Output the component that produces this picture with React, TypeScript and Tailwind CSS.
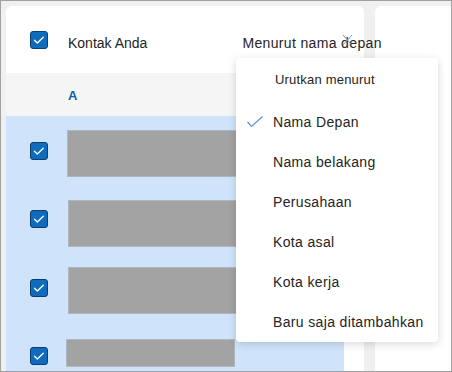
import React from 'react';

const Checkbox: React.FC<{ className?: string }> = ({ className = '' }) => (
  <div
    className={`w-[18px] h-[18px] shrink-0 rounded-[3px] bg-[#0f6cbd] border border-[#0c3d6b] flex items-center justify-center ${className}`}
  >
    <svg width="16" height="16" viewBox="0 0 16 16" fill="none">
      <path
        d="M3.5 8.3 L6.3 11 L12.3 5.2"
        stroke="#ffffff"
        strokeWidth="1.3"
        strokeLinecap="round"
        strokeLinejoin="round"
      />
    </svg>
  </div>
);

const sortOptions = [
  'Nama Depan',
  'Nama belakang',
  'Perusahaan',
  'Kota asal',
  'Kota kerja',
  'Baru saja ditambahkan',
];

export default function App() {
  return (
    <div
      className="relative w-[452px] h-[372px] overflow-hidden border border-[#a0a0a0] bg-[#f0f0f0] pt-[5px] pl-[5px] flex gap-[11px] text-[#242424]"
      style={{ fontFamily: '"Liberation Sans", Arial, sans-serif' }}
    >
      {/* Contact list */}
      <div className="w-[358px] shrink-0 flex flex-col">
        {/* Header */}
        <div className="h-[67px] shrink-0 bg-white rounded-t-[6px] flex items-start pl-[24px]">
          <Checkbox className="mt-[25px]" />
          <span className="shrink-0 mt-[27px] ml-[20px] text-[14px] leading-5 whitespace-nowrap">
            Kontak Anda
          </span>
          <span className="relative z-10 shrink-0 mt-[27px] ml-[95px] text-[14px] leading-5 tracking-[0.35px] whitespace-nowrap">
            Menurut nama depan
          </span>
        </div>

        {/* Letter group */}
        <div className="h-[43px] shrink-0 bg-[#f5f5f5] pl-[62px] pt-[10px]">
          <span className="text-[13px] leading-5 font-bold text-[#115ea3]">
            A
          </span>
        </div>

        {/* Rows */}
        <div className="flex-1 flex">
          <div className="w-[338px] bg-[#cfe4fa] flex flex-col pl-[24px]">
            <div className="mt-[14px] flex items-start">
              <Checkbox className="mt-[12px]" />
              <div className="ml-[19px] w-[240px] h-[47px] bg-[#a3a3a3] border border-[#aeb6bf]" />
            </div>
            <div className="mt-[23px] flex items-start">
              <Checkbox className="mt-[10px]" />
              <div className="ml-[20px] w-[240px] h-[47px] bg-[#a3a3a3] border border-[#aeb6bf]" />
            </div>
            <div className="mt-[20px] flex items-start">
              <Checkbox className="mt-[12px]" />
              <div className="ml-[20px] w-[240px] h-[47px] bg-[#a3a3a3] border border-[#aeb6bf]" />
            </div>
            <div className="mt-[25px] flex items-start">
              <Checkbox className="mt-[8px]" />
              <div className="ml-[18px] w-[169px] h-[28px] bg-[#a3a3a3] border border-[#aeb6bf]" />
            </div>
          </div>
          <div className="flex-1 bg-white" />
        </div>
      </div>

      {/* Right pane */}
      <div className="flex-1 bg-white rounded-tl-[6px]" />

      {/* Cursor mark */}
      <svg
        className="absolute z-20 left-[341px] top-[33px]"
        width="11"
        height="12"
        viewBox="0 0 11 12"
        fill="none"
      >
        <path d="M1 1 L10 11 M10 1 L1 11" stroke="#6c9fd6" strokeWidth="1" />
      </svg>

      {/* Sort menu */}
      <div className="absolute z-30 left-[235px] top-[57px] w-[202px] bg-white rounded-[4px] shadow-[0_2px_8px_rgba(0,0,0,0.16)] pt-[12px]">
        <div className="h-[32px] pl-[39px] text-[13px] leading-5 tracking-[0.2px] whitespace-nowrap">
          Urutkan menurut
        </div>
        {sortOptions.map((label, i) => (
          <div key={label} className="h-10 flex items-center pl-[11px]">
            <div className="w-[26px] shrink-0">
              {i === 0 && (
                <svg width="16" height="12" viewBox="0 0 16 12" fill="none">
                  <path
                    d="M0.5 6 L4.5 10.5 L15.5 0.5"
                    stroke="#5b93d3"
                    strokeWidth="1.2"
                  />
                </svg>
              )}
            </div>
            <span className="text-[14px] leading-5 tracking-[0.35px] whitespace-nowrap">
              {label}
            </span>
          </div>
        ))}
      </div>
    </div>
  );
}
